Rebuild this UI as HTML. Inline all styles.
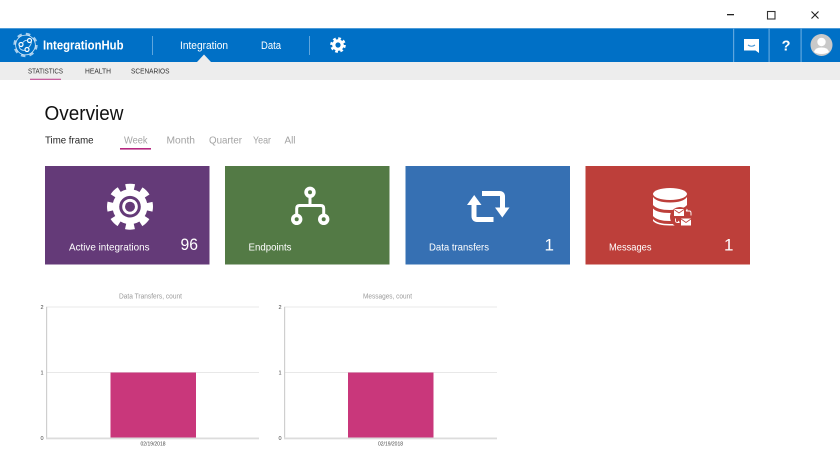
<!DOCTYPE html>
<html><head><meta charset="utf-8"><title>IntegrationHub</title>
<style>
html,body{margin:0;padding:0;background:#fff;width:840px;height:450px;overflow:hidden}
svg{display:block;filter:blur(0.3px)}
text{font-family:"Liberation Sans",sans-serif}
</style></head><body>
<svg width="840" height="450" viewBox="0 0 840 450" xmlns="http://www.w3.org/2000/svg">
<rect width="840" height="450" fill="#fff"/>
<!-- window controls -->
<rect x="727" y="14" width="7" height="1.3" fill="#222"/>
<rect x="767.5" y="11.5" width="7.500" height="7.500" fill="none" stroke="#333" stroke-width="1.1"/>
<path d="M811.5 11.500l7 7M818.500 11.500l-7 7" stroke="#222" stroke-width="1.1" fill="none"/>
<!-- header -->
<rect y="28" width="840" height="34" fill="#0070c6"/>
<rect y="28" width="840" height="1" fill="#4c9bd8"/>
<rect y="62" width="840" height="18" fill="#ededed"/>
<path d="M197 62L204 54.500L211 62Z" fill="#ededed"/>
<!-- logo -->
<circle cx="25.500" cy="45" r="11" fill="none" stroke="#cfe6f7" stroke-width="2.400" stroke-dasharray="4.500 4.140" opacity="0.800"/>
<circle cx="25.500" cy="45" r="9.800" fill="none" stroke="#cfe6f7" stroke-width="0.900"/>
<circle cx="25.500" cy="45" r="9.300" fill="#0070c6"/>
<g fill="none" stroke="#fff" stroke-width="1.200">
<circle cx="21" cy="44.500" r="2"/><circle cx="29.500" cy="40.500" r="2"/><circle cx="27" cy="49.500" r="2"/>
<path d="M22.500 43Q25 39.500 27.500 40.500M28.500 47.500Q31 45 31.500 42M19 46.500Q20 50.500 25 50.500" stroke="#bfe0f7" stroke-width="0.900"/>
</g>
<text x="43" y="49.500" font-size="12.500" font-weight="700" fill="#fff" textLength="80.500" lengthAdjust="spacingAndGlyphs">IntegrationHub</text>
<rect x="152" y="36" width="1" height="19" fill="#5ea6de"/>
<text x="180" y="49" font-size="10.800" fill="#fff" textLength="48" lengthAdjust="spacingAndGlyphs">Integration</text>
<text x="261" y="49" font-size="10.800" fill="#fff" textLength="20" lengthAdjust="spacingAndGlyphs">Data</text>
<rect x="309" y="36" width="1" height="19" fill="#5ea6de"/>
<!-- header gear -->
<circle cx="338" cy="45" r="5.800" fill="#fff"/>
<circle cx="338" cy="45" r="6" fill="none" stroke="#fff" stroke-width="3.600" stroke-dasharray="2.500 2.210"/>
<circle cx="338" cy="45" r="2.600" fill="#0070c6"/>
<!-- right header -->
<rect x="733" y="28" width="1.200" height="34" fill="#5ea6de"/>
<rect x="768.500" y="28" width="1.200" height="34" fill="#5ea6de"/>
<rect x="800.500" y="28" width="1.200" height="34" fill="#5ea6de"/>
<path d="M744 39H759V53L755.500 50.500H744Z" fill="#fff"/>
<path d="M748 45Q751.500 47.500 755 45" stroke="#3f93d6" stroke-width="1.100" fill="none"/>
<text x="786" y="50.500" font-size="14.500" font-weight="700" fill="#fff" text-anchor="middle">?</text>
<circle cx="821.500" cy="45" r="11" fill="#c9c9c9"/>
<circle cx="821.500" cy="42" r="4.200" fill="#fff"/>
<path d="M814 52Q815 47.500 821.500 47.500Q828 47.500 829 52Q826 54 821.500 54Q817 54 814 52Z" fill="#fff"/>
<!-- subnav -->
<g font-size="7.300" fill="#333">
<text x="28" y="73.500" textLength="35" lengthAdjust="spacingAndGlyphs">STATISTICS</text>
<text x="85" y="73.500" textLength="26" lengthAdjust="spacingAndGlyphs">HEALTH</text>
<text x="131" y="73.500" textLength="38.500" lengthAdjust="spacingAndGlyphs">SCENARIOS</text>
</g>
<rect x="30" y="78.700" width="31" height="1.300" fill="#c7619f"/>
<!-- heading -->
<text x="44.500" y="120" font-size="20" fill="#111" textLength="79" lengthAdjust="spacingAndGlyphs">Overview</text>
<text x="45" y="143.500" font-size="10.500" fill="#222" textLength="48.500" lengthAdjust="spacingAndGlyphs">Time frame</text>
<g font-size="10.500" fill="#a3a3a3">
<text x="124" y="143.500" textLength="23.500" lengthAdjust="spacingAndGlyphs">Week</text>
<text x="166.500" y="143.500" textLength="28.500" lengthAdjust="spacingAndGlyphs">Month</text>
<text x="209" y="143.500" textLength="33" lengthAdjust="spacingAndGlyphs">Quarter</text>
<text x="253" y="143.500" textLength="18" lengthAdjust="spacingAndGlyphs">Year</text>
<text x="284.500" y="143.500" textLength="11" lengthAdjust="spacingAndGlyphs">All</text>
</g>
<rect x="120" y="148" width="31" height="1.600" fill="#b5277f"/>
<!-- cards -->
<rect x="45" y="166" width="164.500" height="98.500" fill="#643a78"/>
<rect x="225" y="166" width="164.500" height="98.500" fill="#537a45"/>
<rect x="405.500" y="166" width="164.500" height="98.500" fill="#3670b3"/>
<rect x="585.500" y="166" width="164.500" height="98.500" fill="#bd3f3a"/>
<!-- gear icon -->
<circle cx="130" cy="206.700" r="17.500" fill="#fff"/>
<circle cx="130" cy="206.700" r="19.500" fill="none" stroke="#fff" stroke-width="7" stroke-dasharray="8.500 6.810" stroke-dashoffset="4.250"/>
<circle cx="130" cy="206.700" r="10.800" fill="#643a78"/>
<circle cx="130" cy="206.700" r="7.800" fill="#fff"/>
<circle cx="130" cy="206.700" r="5" fill="#643a78"/>
<!-- endpoints icon -->
<circle cx="310" cy="192.300" r="5.700" fill="#fff"/>
<circle cx="296.700" cy="219.300" r="5.700" fill="#fff"/>
<circle cx="323.700" cy="219.300" r="5.700" fill="#fff"/>
<circle cx="310" cy="192.300" r="2" fill="#537a45"/>
<circle cx="296.700" cy="219.300" r="2" fill="#537a45"/>
<circle cx="323.700" cy="219.300" r="2" fill="#537a45"/>
<path d="M310 197V205.500M296.700 215V208.500Q296.700 205.500 299.700 205.500H320.700Q323.700 205.500 323.700 208.500V215" fill="none" stroke="#fff" stroke-width="3"/>
<!-- transfers icon -->
<g fill="none" stroke="#fff" stroke-width="5">
<path d="M482 193.500H499.500Q502.500 193.500 502.500 196.500V208"/>
<path d="M474 204V216Q474 219.500 477 219.500H493.500"/>
</g>
<path d="M495 207.500H509.500L502.300 217.500Z" fill="#fff"/>
<path d="M467 205H481.500L474.200 195Z" fill="#fff"/>
<!-- messages icon -->
<g fill="#fff">
<ellipse cx="670" cy="194" rx="17" ry="6"/>
<path d="M653 197Q657 202.500 670 202.500Q683 202.500 687 197V205Q683 210 670 210Q657 210 653 205Z"/>
<path d="M653 208.500Q657 213 670 213Q683 213 687 208.500V216Q683 221 670 221Q657 221 653 216Z"/>
<path d="M653 219Q657 224 670 224L676 224V225.500H670Q657 225.500 653 221Z"/>
</g>
<circle cx="680" cy="217" r="10" fill="#bd3f3a"/>
<rect x="674" y="209" width="10" height="7" fill="#fff"/>
<path d="M674 209.500L679 213L684 209.500" stroke="#bd3f3a" stroke-width="0.800" fill="none"/>
<rect x="681" y="218.500" width="10" height="7" fill="#fff"/>
<path d="M681 219L686 222.500L691 219" stroke="#bd3f3a" stroke-width="0.800" fill="none"/>
<path d="M686 211H689.500Q691 211 691 213V215.500M686 211L687.500 209.500M675.500 218.500V220.500Q675.500 222.500 677.500 222.500H679.500M679.500 222.500L678 221" stroke="#fff" stroke-width="0.900" fill="none"/>
<!-- card text -->
<g font-size="10.500" fill="#fff">
<text x="69" y="250.500" textLength="80.500" lengthAdjust="spacingAndGlyphs">Active integrations</text>
<text x="248.500" y="250.500" textLength="43" lengthAdjust="spacingAndGlyphs">Endpoints</text>
<text x="429" y="250.500" textLength="60" lengthAdjust="spacingAndGlyphs">Data transfers</text>
<text x="609" y="250.500" textLength="42.500" lengthAdjust="spacingAndGlyphs">Messages</text>
</g>
<g font-size="17" fill="#fff">
<text x="180.500" y="250" textLength="17.500" lengthAdjust="spacingAndGlyphs">96</text>
<text x="544.500" y="250.500">1</text>
<text x="724" y="250.500">1</text>
</g>
<!-- chart 1 -->
<g>
<text x="119" y="298.500" font-size="7" fill="#9a9a9a" textLength="63" lengthAdjust="spacingAndGlyphs">Data Transfers, count</text>
<rect x="46" y="306.500" width="213" height="1" fill="#e8e8e8"/>
<rect x="46" y="372" width="213" height="1" fill="#e8e8e8"/>
<rect x="110.500" y="372.500" width="85.500" height="65.500" fill="#c9377b"/>
<rect x="46" y="307" width="1.200" height="131" fill="#cfcfcf"/>
<rect x="46" y="437.500" width="213" height="1.800" fill="#dcdcdc"/>
<g font-size="5.500" fill="#444">
<text x="40.500" y="309">2</text><text x="40.500" y="374.500">1</text><text x="40.500" y="440">0</text>
<text x="140.500" y="445.500" textLength="25" lengthAdjust="spacingAndGlyphs">02/19/2018</text>
</g>
</g>
<!-- chart 2 -->
<g>
<text x="363" y="298.500" font-size="7" fill="#9a9a9a" textLength="49" lengthAdjust="spacingAndGlyphs">Messages, count</text>
<rect x="284" y="306.500" width="213" height="1" fill="#e8e8e8"/>
<rect x="284" y="372" width="213" height="1" fill="#e8e8e8"/>
<rect x="348" y="372.500" width="85.500" height="65.500" fill="#c9377b"/>
<rect x="284" y="307" width="1.200" height="131" fill="#cfcfcf"/>
<rect x="284" y="437.500" width="213" height="1.800" fill="#dcdcdc"/>
<g font-size="5.500" fill="#444">
<text x="278.500" y="309">2</text><text x="278.500" y="374.500">1</text><text x="278.500" y="440">0</text>
<text x="378" y="445.500" textLength="25" lengthAdjust="spacingAndGlyphs">02/19/2018</text>
</g>
</g>
</svg>
</body></html>
